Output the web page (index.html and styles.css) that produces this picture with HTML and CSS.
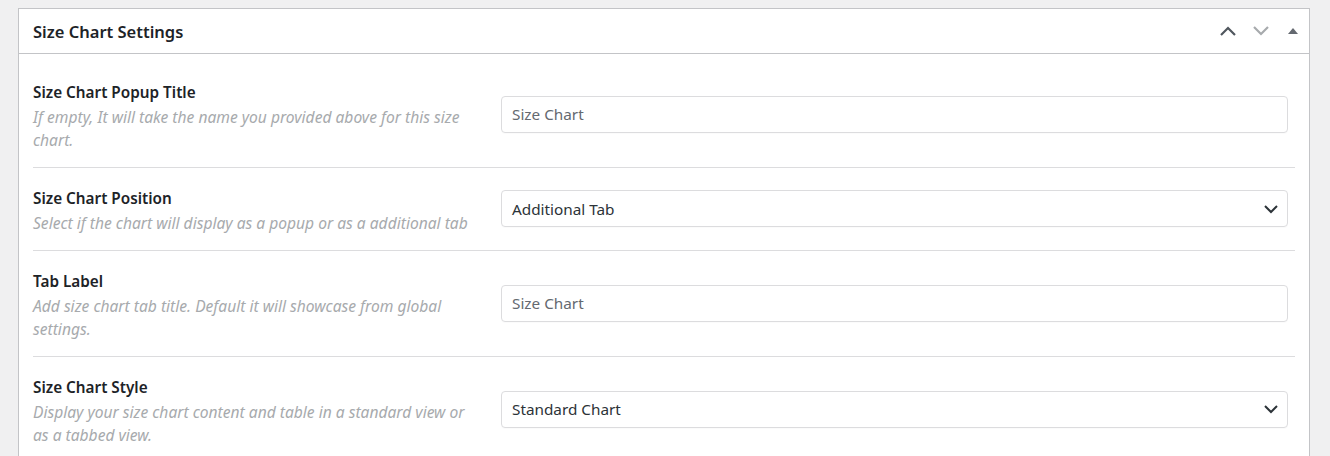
FILE: index.html
```html
<!doctype html>
<html lang="en">
<head>
  <meta charset="utf-8">
  <title>Size Chart Settings</title>
  <link rel="stylesheet" href="styles.css">
</head>
<body>

<div class="postbox">
  <div class="postbox-header">
    <h2>Size Chart Settings</h2>
    <div class="handle-actions">
      <svg class="move-up" width="18" height="12" viewBox="0 0 18 12"><polyline points="2,10 9,3 16,10" fill="none" stroke="currentColor" stroke-width="2.2"/></svg>
      <svg class="move-down" width="18" height="12" viewBox="0 0 18 12"><polyline points="2,2 9,9 16,2" fill="none" stroke="currentColor" stroke-width="2.2"/></svg>
      <svg class="toggle" width="10" height="8" viewBox="0 0 10 8"><polygon points="0,7 5,1 10,7" fill="currentColor"/></svg>
    </div>
  </div>

  <div class="inside">
    <div class="field-row">
      <div class="field-label">
        <div class="label-title">Size Chart Popup Title</div>
        <div class="label-desc">If empty, It will take the name you provided above for this size chart.</div>
      </div>
      <div class="field-control">
        <div class="text-input placeholder">Size Chart</div>
      </div>
    </div>

    <div class="field-row">
      <div class="field-label">
        <div class="label-title">Size Chart Position</div>
        <div class="label-desc">Select if the chart will display as a popup or as a additional tab</div>
      </div>
      <div class="field-control">
        <div class="text-input select">
          <span>Additional Tab</span>
          <svg width="16" height="10" viewBox="0 0 16 10"><polyline points="2,2 8,8 14,2" fill="none" stroke="#2c3338" stroke-width="2"/></svg>
        </div>
      </div>
    </div>

    <div class="field-row">
      <div class="field-label">
        <div class="label-title">Tab Label</div>
        <div class="label-desc">Add size chart tab title. Default it will showcase from global settings.</div>
      </div>
      <div class="field-control">
        <div class="text-input placeholder">Size Chart</div>
      </div>
    </div>

    <div class="field-row">
      <div class="field-label">
        <div class="label-title">Size Chart Style</div>
        <div class="label-desc">Display your size chart content and table in a standard view or as a tabbed view.</div>
      </div>
      <div class="field-control">
        <div class="text-input select">
          <span>Standard Chart</span>
          <svg width="16" height="10" viewBox="0 0 16 10"><polyline points="2,2 8,8 14,2" fill="none" stroke="#2c3338" stroke-width="2"/></svg>
        </div>
      </div>
    </div>
  </div>
</div>

</body>
</html>
```

FILE: styles.css
```css
body {
    margin: 0;
    padding: 8px 20px 0 18px;
    background-color: #f0f0f1;
    font-family: "Noto Sans", "Open Sans", sans-serif;
    color: #1d2327;
}

.postbox {
    background: #fff;
    border: 1px solid #c3c4c7;
    border-bottom: 0;
    height: 460px;
}

.postbox-header {
    display: flex;
    align-items: center;
    justify-content: space-between;
    height: 44px;
    border-bottom: 1px solid #c3c4c7;
    padding: 0 11px 0 14px;
}

.postbox-header h2 {
    margin: 0;
    font-size: 16.5px;
    font-weight: 600;
    color: #1d2327;
}

.handle-actions {
    display: flex;
    align-items: center;
    gap: 15px;
}

.move-up {
    color: #50575e;
}

.move-down {
    color: #a7aaad;
}

.toggle {
    color: #646970;
    margin-left: 3px;
}

.inside {
    padding: 8px 14px 0 14px;
}

.field-row {
    display: grid;
    grid-template-columns: 468px 1fr;
    align-items: center;
    padding: 18px 0 15px;
    border-bottom: 1px solid #dcdcde;
}

.label-title {
    font-size: 15.3px;
    font-weight: 600;
    line-height: 24px;
    color: #1d2327;
}

.label-desc {
    margin-top: 2px;
    font-size: 15.6px;
    font-style: italic;
    line-height: 23px;
    color: #a7aaad;
    padding-right: 20px;
}

.field-control {
    padding-right: 7px;
    padding-bottom: 4px;
}

.text-input {
    display: flex;
    align-items: center;
    height: 35px;
    border: 1px solid #dcdcde;
    border-radius: 4px;
    padding: 0 10px;
    font-size: 15.3px;
    color: #2c3338;
    box-shadow: 0 1px 1px rgba(0, 0, 0, 0.02);
}

.text-input.placeholder {
    color: #646970;
}

.text-input.select {
    justify-content: space-between;
    padding-right: 8px;
}
```
